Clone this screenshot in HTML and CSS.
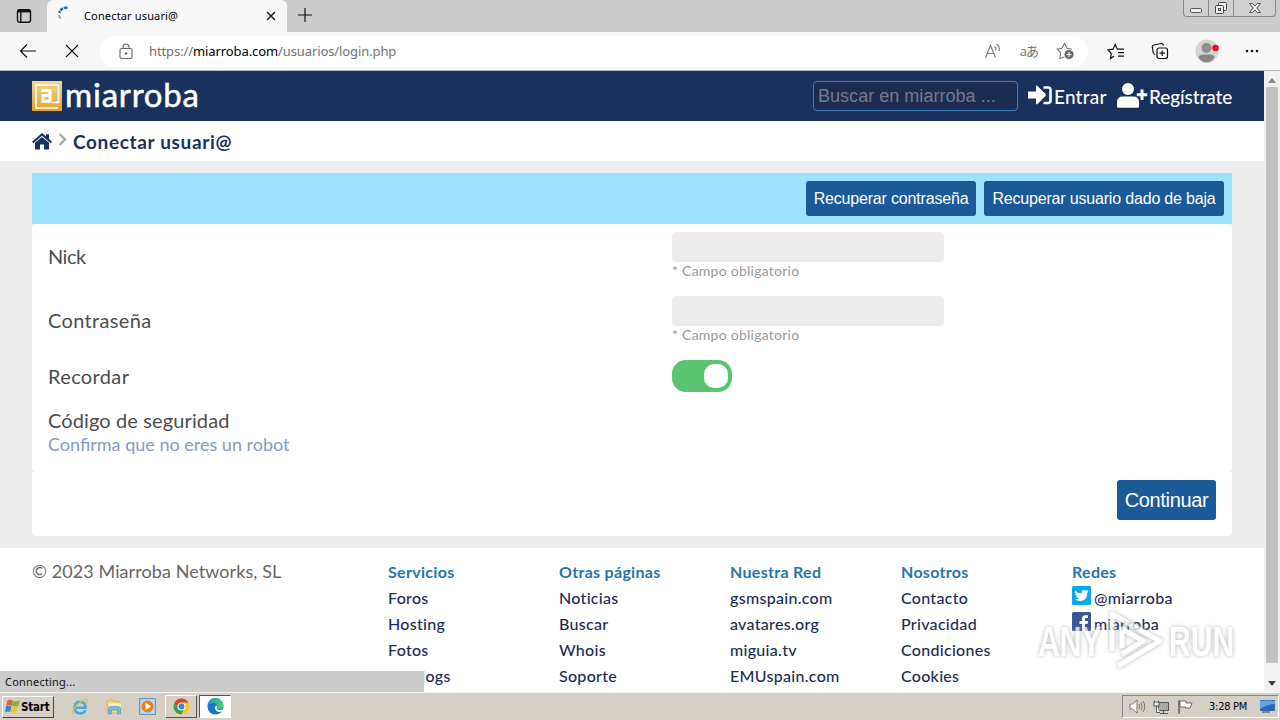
FILE: index.html
```html
<!DOCTYPE html>
<html lang="es">
<head>
    <meta charset="UTF-8">
    <meta name="viewport" content="width=device-width, initial-scale=1.0">
    <title>Conectar usuari@</title>
    <link rel="stylesheet" href="styles.css">
</head>
<body>
    <!-- Browser tabs -->
    <div class="tabstrip">
        <div class="tab-actions">
            <svg width="16" height="16" viewBox="0 0 16 16" fill="none" stroke="#111" stroke-width="1.4"><rect x="1.5" y="1.7" width="13" height="12.6" rx="2"/><path d="M1.5 3.2h13" stroke-width="2.4"/><path d="M4.8 4v10"/></svg>
        </div>
        <div class="tab">
            <svg class="spinner" width="16" height="16" viewBox="0 0 16 16" fill="none" stroke="#1f6cab" stroke-width="2.6"><path d="M11.5 1.8Q5 1.2 3.2 7" stroke-dasharray="3.4 1"/><path d="M3 9.2Q3.3 11 4.6 12.4" stroke="#6fa6cf" stroke-width="2"/></svg>
            <span class="tab-title">Conectar usuari@</span>
            <svg class="tab-close" width="10" height="10" viewBox="0 0 10 10" stroke="#111" stroke-width="1.3"><path d="M1 1l8 8M9 1l-8 8"/></svg>
        </div>
        <svg class="new-tab" width="16" height="16" viewBox="0 0 16 16" stroke="#111" stroke-width="1.2"><path d="M8 1v14M1 8h14"/></svg>
        <div class="window-buttons">
            <span class="win-min"><svg width="14" height="7" viewBox="0 0 14 7" fill="#eee" stroke="#555"><rect x="1.5" y="1.5" width="11" height="4" rx="1"/></svg></span>
            <span class="win-max"><svg width="14" height="14" viewBox="0 0 14 14" fill="#eee" stroke="#444"><rect x="4.5" y="1.5" width="8" height="8" rx="1"/><rect x="1.5" y="4.5" width="8" height="8" rx="1"/><rect x="4.5" y="7.5" width="2" height="2"/></svg></span>
            <span class="win-close"><svg width="14" height="12" viewBox="0 0 14 12" fill="#eee" stroke="#555"><path d="M1.5 1.5h3.2L7 4l2.3-2.5h3.2L8.8 6l3.7 4.5H9.3L7 8l-2.3 2.5H1.5L5.2 6z"/></svg></span>
        </div>
    </div>

    <!-- Address bar -->
    <div class="toolbar">
        <svg class="back" width="18" height="16" viewBox="0 0 18 16" fill="none" stroke="#111" stroke-width="1.2"><path d="M17 8H1.5M8 1.5L1.5 8L8 14.5"/></svg>
        <svg class="stop" width="14" height="14" viewBox="0 0 14 14" stroke="#111" stroke-width="1.1"><path d="M1 1l12 12M13 1L1 13"/></svg>
        <div class="address">
            <svg class="lock" width="14" height="17" viewBox="0 0 14 17" fill="none" stroke="#666" stroke-width="1.1"><rect x="1" y="5.5" width="12" height="10" rx="1.5"/><path d="M4 5.5V4a3 3 0 0 1 6 0v1.5"/><circle cx="7" cy="10.5" r=".8" fill="#666"/></svg>
            <span class="url">https://<b>miarroba.com</b>/usuarios/login.php</span>
            <svg class="read" width="18" height="16" viewBox="0 0 18 16" fill="none" stroke="#777" stroke-width="1.1"><path d="M1.5 14.5L6.5 2.5L11.5 14.5M3.3 10.5h6.5M10.5 3.5q2 1.5 1.5 4M12.5 1q3.5 2.5 2.5 7"/></svg>
            <span class="translate">aあ</span>
            <svg class="fav" width="19" height="18" viewBox="0 0 19 18" fill="none" stroke="#777" stroke-width="1.1"><path d="M8.5 15L4 16.5L4.6 11L1.2 7.2L6 6.2L8.5 1.5L11 6.2L15.8 7.2"/><circle cx="13" cy="12.5" r="4.6" fill="#666" stroke="none"/><path d="M13 10v5M10.5 12.5h5" stroke="#fff"/></svg>
        </div>
        <svg class="favs" width="18" height="17" viewBox="0 0 18 17" fill="none" stroke="#111" stroke-width="1.2"><path d="M7 13L3.5 15.5L4.3 10.5L1 7L6 6.2L8.2 1.5L10.3 6.2H17M11 9.7h6M11 13.2h6"/></svg>
        <svg class="collections" width="18" height="18" viewBox="0 0 18 18" fill="none" stroke="#111" stroke-width="1.2"><rect x="6" y="6" width="10.5" height="10.5" rx="2"/><path d="M11.2 8.5v5.5M8.5 11.2H14M4 12.5Q2.5 12 2.2 10.5L1.3 5Q1.2 3.3 3 3L10 1.5Q12 1.2 12.5 3.5"/></svg>
        <svg class="avatar" width="24" height="24" viewBox="0 0 24 24"><circle cx="12" cy="12" r="11.5" fill="#d6d4d2"/><circle cx="11.5" cy="9" r="5" fill="#918d8c"/><path d="M3.500 18.500Q4 15.500 8 15.500H15.500Q19 15.500 19.500 18.500Q16.500 23.500 11.500 23.500Q6.500 23.500 3.500 18.500z" fill="#8a8685"/><circle cx="20.500" cy="9" r="3.200" fill="#e3101c"/></svg>
        <svg class="more" width="14" height="4" viewBox="0 0 14 4" fill="#111"><circle cx="2" cy="2" r="1.3"/><circle cx="7" cy="2" r="1.3"/><circle cx="12" cy="2" r="1.3"/></svg>
    </div>

    <div class="viewport">
        <div class="page">
            <header class="site-header">
                <svg class="logo-mark" width="30" height="30" viewBox="0 0 30 30">
                    <defs><linearGradient id="gold" x1="0" y1="0" x2="0" y2="1"><stop offset="0" stop-color="#f3d58b"/><stop offset="1" stop-color="#e5a127"/></linearGradient></defs>
                    <rect width="30" height="30" fill="url(#gold)"/>
                    <path d="M26 27H4V4H26.500V21.500H20" fill="none" stroke="#fff" stroke-width="1.700"/>
                    <path d="M9.500 9.500H18V21.500M18 14.500H11V20.200H18" fill="none" stroke="#fff" stroke-width="3"/>
                </svg>
                <span class="logo-text">miarroba</span>
                <input class="search" type="text" placeholder="Buscar en miarroba ...">
                <a class="nav-link login" href="#"><svg width="24" height="20" viewBox="0 0 24 20" fill="#fff"><path d="M0 6.500H8V1.500Q8 0 9.500 1L17.500 9Q18.300 10 17.500 11L9.500 19Q8 20 8 18.500V13.500H0z"/><path d="M15.500 2.500H20Q22.500 2.500 22.500 5V15.500Q22.500 18 20 18H15.500" fill="none" stroke="#fff" stroke-width="2.600"/></svg><span>Entrar</span></a>
                <a class="nav-link register" href="#"><svg width="31" height="25" viewBox="0 0 31 25" fill="#fff"><circle cx="11" cy="6" r="6"/><path d="M0 24V19Q0 13.500 6 13.500H16Q22 13.500 22 19V24Q22 24.800 21 24.800H1Q0 24.800 0 24z"/><path d="M25 6.500V17M19.800 11.800H30.300" stroke="#fff" stroke-width="3"/></svg><span>Regístrate</span></a>
            </header>

            <nav class="breadcrumb">
                <svg width="20" height="17" viewBox="0 0 20 17" fill="#1a315d"><path d="M10 0L14 3.400V1.200H17V6L20 8.700L18.700 10.200L10 2.800L1.300 10.200L0 8.700z"/><path d="M10 3.900L17 9.800V16.500H12V11.500H8V16.500H3V9.800z"/></svg>
                <svg class="chevron" width="9" height="13" viewBox="0 0 9 13" fill="none" stroke="#aaa" stroke-width="2.400"><path d="M1.500 1L7 6.500L1.500 12"/></svg>
                <span class="crumb">Conectar usuari@</span>
            </nav>

            <main class="content">
                <div class="actions">
                    <button class="btn small recover">Recuperar contraseña</button>
                    <button class="btn small restore">Recuperar usuario dado de baja</button>
                </div>
                <form class="card login-form">
                    <div class="row">
                        <label class="nick">Nick</label>
                        <div class="field"><input type="text"><small>* Campo obligatorio</small></div>
                    </div>
                    <div class="row">
                        <label class="pass">Contraseña</label>
                        <div class="field"><input type="password"><small>* Campo obligatorio</small></div>
                    </div>
                    <div class="row">
                        <label class="remember">Recordar</label>
                        <div class="toggle"></div>
                    </div>
                    <div class="captcha">
                        <label class="code">Código de seguridad</label>
                        <span class="captcha-hint">Confirma que no eres un robot</span>
                    </div>
                </form>
                <div class="card submit">
                    <button class="btn continue">Continuar</button>
                </div>
            </main>

            <footer class="site-footer">
                <div class="copyright">© 2023 Miarroba Networks, SL</div>
                <ul>
                    <li class="title">Servicios</li>
                    <li>Foros</li>
                    <li>Hosting</li>
                    <li>Fotos</li>
                    <li>Fotologs</li>
                </ul>
                <ul>
                    <li class="title">Otras páginas</li>
                    <li>Noticias</li>
                    <li>Buscar</li>
                    <li>Whois</li>
                    <li>Soporte</li>
                </ul>
                <ul>
                    <li class="title">Nuestra Red</li>
                    <li>gsmspain.com</li>
                    <li>avatares.org</li>
                    <li>miguia.tv</li>
                    <li>EMUspain.com</li>
                </ul>
                <ul>
                    <li class="title">Nosotros</li>
                    <li>Contacto</li>
                    <li>Privacidad</li>
                    <li>Condiciones</li>
                    <li>Cookies</li>
                </ul>
                <ul>
                    <li class="title">Redes</li>
                    <li class="social"><svg width="19" height="19" viewBox="0 0 19 19"><rect width="19" height="19" rx="1.500" fill="#0aa9e8"/><path d="M3 4.500Q6 7.500 9.500 7.500Q9.300 4 12.300 4Q13.500 4 14.300 4.800L16.300 4L15.300 5.800L16.500 5.700L15.200 7.200Q15 14.800 8 15Q5 15 3 13.600Q5.500 13.700 6.700 12.500Q4.800 12.200 4.200 10.600H5.300Q3.200 9.700 3.200 7.700L4.200 8Q2.300 6.500 3 4.500z" fill="#fff"/></svg>@miarroba</li>
                    <li class="social"><svg width="19" height="19" viewBox="0 0 19 19"><rect width="19" height="19" rx="1.500" fill="#3b5694"/><path d="M10 19V12H7.500V9H10V7Q10 3.300 13.500 3.300H16V6H14.300Q13 6 13 7.300V9H16L15.600 12H13V19z" fill="#fff"/></svg>miarroba</li>
                </ul>
            </footer>
            <div class="status">Connecting...</div>
        </div>
        <div class="scrollbar">
            <svg width="8" height="5" viewBox="0 0 8 5" fill="#858585"><path d="M0 5L4 0L8 5z"/></svg>
            <div class="thumb"></div>
            <svg width="8" height="5" viewBox="0 0 8 5" fill="#444"><path d="M0 0L4 5L8 0z"/></svg>
        </div>
    </div>

    <div class="taskbar">
        <div class="start">
            <svg width="15" height="15" viewBox="0 0 15 15"><path d="M2.500 1.500Q5 0 7.800 1.500L6.700 6.800Q4 5.800 1.200 7z" fill="#e8602c"/><path d="M8 1.800Q11 3 15 1.500L13.300 7Q10 8.200 7 6.800z" fill="#79b83b"/><path d="M1 7.300Q3.800 6.200 6.500 7.200L5.200 13Q2.500 12 0 13.500z" fill="#3b86d0"/><path d="M6.800 7.300Q10 8.700 13.200 7.300L11.700 13.300Q8.500 14.500 5.500 13.200z" fill="#f5c336"/></svg>
            <span>Start</span>
        </div>
        <svg class="task-ie" width="18" height="18" viewBox="0 0 18 18" fill="none"><path d="M14.500 12.200Q13 15.500 9 15.500Q3.500 15 3.500 9.500Q4 4 9 3.800Q14.500 4 14.500 9.800H4.500" stroke="#43a9e0" stroke-width="2.600"/><path d="M2.500 16.500Q-.5 14 5.500 7.500Q12 1 15.500 1.800Q17.500 2.500 15.500 6" stroke="#e9bf43" stroke-width="1.300"/></svg>
        <svg class="task-folder" width="18" height="18" viewBox="0 0 18 18"><path d="M2 3.500L7 1.500L8.500 3.500H15V15H2z" fill="#f0d77d" stroke="#cfae50" stroke-width=".7"/><path d="M4 5.500H16V9H4z" fill="#fbefb5"/><path d="M3.500 16V11Q3.500 8.500 6 8.500H13Q15.500 8.500 15.500 11V16H12.500V12H6.500V16z" fill="#77bce2" stroke="#4e92bd" stroke-width=".6"/></svg>
        <svg class="task-media" width="17" height="17" viewBox="0 0 17 17"><rect x=".5" y=".5" width="16" height="16" fill="#a8d0ea" stroke="#5f9cc8"/><rect x="2.500" y="2.500" width="12" height="12" fill="#c5dded"/><circle cx="8.500" cy="8.500" r="6" fill="#ed7f17"/><path d="M6.500 4.700V12.300L12.300 8.500z" fill="#fff"/></svg>
        <div class="task raised">
            <svg width="17" height="17" viewBox="0 0 17 17"><circle cx="8.500" cy="8.500" r="8" fill="#f8c925"/><path d="M8.500 8.500H4.800L1.600 4.500A8 8 0 0 0 8.200 16.500L11.700 10.300z" fill="#38a24b"/><path d="M1.600 4.500A8 8 0 0 1 15.400 4.500H8.500A4 4 0 0 0 5 10.500z" fill="#df3c2e"/><circle cx="8.500" cy="8.500" r="4" fill="#fff"/><circle cx="8.500" cy="8.500" r="3" fill="#3e7ee8"/></svg>
        </div>
        <div class="task active">
            <svg width="17" height="17" viewBox="0 0 17 17"><defs><linearGradient id="edge"><stop offset="0" stop-color="#1d8fd8"/><stop offset="1" stop-color="#54cf64"/></linearGradient></defs><circle cx="8.500" cy="8.500" r="8" fill="#1676c8"/><path d="M.5 8A8 8 0 0 1 16.500 7.500Q16.500 11 12.500 11Q9 11 10.200 8.500Q10 5 6 5Q2.500 5 .5 8z" fill="url(#edge)"/><path d="M10.200 7.500Q8.800 11 11.500 11.800Q14 12.300 16.200 11.300L15 13.500Q12 14.500 9.500 13Q7.500 11.500 8 9Q8.800 7.500 10.200 7.500z" fill="#fff"/></svg>
        </div>
        <div class="tray">
            <svg class="tray-sound" width="17" height="15" viewBox="0 0 17 15" fill="#fff" stroke="#777"><path d="M1 5H3.500L8 1V14L3.500 10H1z"/><path d="M10 5Q11.500 7.500 10 10M12 3.500Q14.500 7.500 12 11.500M14 2Q17.500 7.500 14 13" fill="none"/></svg>
            <svg class="tray-net" width="17" height="16" viewBox="0 0 17 16" fill="#eee" stroke="#555"><rect x="5.500" y="3.500" width="10" height="8" fill="#aaa"/><path d="M7 14.500h8M10.500 12v2M1.500 1.500V5.500H5.500V1.500M3.500 5.500V13.500H7"/><rect x="1" y="3" width="5" height="4"/></svg>
            <svg class="tray-flag" width="17" height="16" viewBox="0 0 17 16" fill="#fff" stroke="#666"><path d="M2 1V15" stroke-width="1.600"/><path d="M3 2H9V4H15L13 9H8.500V8H3z"/></svg>
            <span class="clock">3:28 PM</span>
            <svg class="tray-desktop" width="15" height="13" viewBox="0 0 15 13"><rect width="15" height="11" rx="1" fill="#2b66bb"/><path d="M0 1Q7 0 15 1V4Q7 4 0 9z" fill="#68a4de"/><path d="M2 12h8" stroke="#345"/></svg>
        </div>
    </div>

    <div class="watermark">
        <span>ANY</span>
        <svg width="58" height="64" viewBox="0 0 58 64" fill="none" stroke="#fff" stroke-width="5" stroke-linejoin="round"><path d="M4 42V5L52 32L10 57"/><path d="M14 39V20L35 32L14 45"/></svg>
        <span>RUN</span>
    </div>
</body>
</html>
```
FILE: styles.css
```css
* {
    box-sizing: border-box;
}

body {
    margin: 0;
    width: 1280px;
    height: 720px;
    display: flex;
    flex-direction: column;
    overflow: hidden;
    position: relative;
    background-color: #d5cfc6;
    font-family: Lato, sans-serif;
}

svg {
    display: block;
    flex: none;
}

/* Browser */
.tabstrip {
    height: 32px;
    display: flex;
    background-color: #cccccc;
    font-family: "Noto Sans", sans-serif;
    font-size: 11px;
}

.tab-actions {
    width: 47px;
    padding: 8px 0 0 16px;
}

.tab {
    width: 240px;
    display: flex;
    align-items: center;
    padding: 0 11px 0 9px;
    background-color: #f7f7f7;
    border-radius: 6px 6px 0 0;
}

.tab-title {
    margin: -2px 0 0 12px;
    flex: 1;
    white-space: nowrap;
    letter-spacing: 0.15px;
}

.spinner {
    margin-top: -4px;
}

.new-tab {
    margin: 7px 0 0 10px;
}

.window-buttons {
    margin-left: auto;
    margin-right: 4px;
    width: 93px;
    height: 17px;
    display: flex;
    border: 1px solid #888;
    border-top: 0;
    border-radius: 0 0 4px 4px;
    background-color: #d0d0d0;
}

.window-buttons span {
    display: flex;
    align-items: center;
    justify-content: center;
    width: 25px;
    border-right: 1px solid #888;
}

.window-buttons .win-min {
    padding-top: 4px;
}

.window-buttons .win-close {
    flex: 1;
    border-right: 0;
}

.toolbar {
    height: 39px;
    display: flex;
    align-items: center;
    background-color: #f7f7f7;
    border-bottom: 1px solid #a9b6bd;
}

.back {
    margin-left: 19px;
}

.stop {
    margin-left: 28px;
}

.address {
    width: 988px;
    height: 31px;
    margin-left: 21px;
    padding: 0 13px 0 19px;
    display: flex;
    align-items: center;
    background-color: #fff;
    border-radius: 16px;
    color: #707070;
}

.url {
    margin-left: 16px;
    flex: 1;
    font-family: "Noto Sans", sans-serif;
    font-size: 13px;
    letter-spacing: -0.1px;
}

.url b {
    font-weight: 400;
    color: #000;
}

.translate {
    margin: -2px 18px 0 18px;
    font-family: "Open Sans", "Noto Sans CJK JP", sans-serif;
    font-size: 13px;
    letter-spacing: -1px;
}

.favs {
    margin-left: 19px;
}

.collections {
    margin-left: 26px;
}

.avatar {
    margin-left: 26px;
}

.more {
    margin-left: 26px;
}

.viewport {
    height: 621px;
    display: flex;
    overflow: hidden;
}

.page {
    width: 1264px;
    position: relative;
    overflow: hidden;
    background-color: #fff;
}

.scrollbar {
    width: 16px;
    display: flex;
    flex-direction: column;
    align-items: center;
    padding: 7px 0 6px;
    background-color: #f1f1f1;
}

.thumb {
    width: 12px;
    height: 576px;
    margin: 4px 0 auto;
    background-color: #c1c1c1;
}

/* Site header */
.site-header {
    height: 50px;
    padding: 0 32px;
    display: flex;
    align-items: center;
    background-color: #1a315d;
    color: #fff;
}

.logo-text {
    margin: -5px 0 0 3px;
    font-size: 33px;
    letter-spacing: 0.8px;
    -webkit-text-stroke: 0.5px #fff;
}

.search {
    width: 205px;
    height: 30px;
    margin-left: auto;
    padding: 0 4px;
    border: 1px solid #397fb5;
    border-radius: 4px;
    background-color: #1b2b52;
    font: 18px "Liberation Sans", Arial, sans-serif;
    letter-spacing: 0.03px;
    color: #fff;
}

.search::placeholder {
    color: #777b86;
}

.nav-link {
    display: flex;
    align-items: center;
    color: #fff;
    font-size: 19px;
    font-weight: 500;
    text-decoration: none;
}

.nav-link span {
    margin: 1px 0 0 2px;
    letter-spacing: 0.2px;
}

.nav-link svg {
    margin-top: -2px;
}

.login {
    width: 79px;
    margin-left: 10px;
}

.register {
    width: 115px;
    margin-left: 10px;
}

.register span {
    margin-left: 1px;
    letter-spacing: -0.1px;
}

.breadcrumb {
    height: 40px;
    padding: 0 32px;
    display: flex;
    align-items: center;
    color: #1a315d;
}

.chevron {
    margin: -3px 6px 0;
}

.crumb {
    margin-top: 1px;
    font-size: 19px;
    font-weight: 700;
    letter-spacing: 0.65px;
}

/* Content */
.content {
    height: 387px;
    padding: 12px 32px;
    background-color: #ededed;
}

.actions {
    height: 51px;
    padding: 8px;
    display: flex;
    justify-content: flex-end;
    gap: 8px;
    background-color: #9ce3ff;
}

.btn {
    padding: 0;
    border: 0;
    border-radius: 3px;
    background-color: #1b5a98;
    color: #fff;
    font-family: "Liberation Sans", Arial, sans-serif;
    white-space: nowrap;
}

.small {
    height: 35px;
    font-size: 16px;
    letter-spacing: -0.18px;
}

.recover {
    width: 170px;
}

.restore {
    width: 240px;
}

.card {
    background-color: #fff;
    border-radius: 4px;
}

.login-form {
    height: 247px;
    padding: 8px 16px;
    color: #4d4d4d;
    font-size: 20px;
}

.row {
    display: grid;
    grid-template-columns: 624px 1fr;
    align-items: center;
    margin-bottom: 16px;
}

.row label {
    letter-spacing: 0.35px;
}

.row .nick {
    letter-spacing: -0.5px;
}

.code {
    letter-spacing: 0.12px;
}

.field {
    height: 48px;
}

.field input {
    display: block;
    width: 272px;
    height: 30px;
    border: 0;
    border-radius: 4px;
    background-color: #ededed;
}

.field small {
    display: block;
    color: #999;
    font-size: 14px;
    line-height: 17px;
    letter-spacing: 0.25px;
}

.toggle {
    width: 60px;
    height: 32px;
    padding: 4px;
    border-radius: 14px;
    background-color: #5bc470;
}

.toggle::after {
    content: "";
    display: block;
    width: 24px;
    height: 24px;
    margin-left: auto;
    border-radius: 10px;
    background-color: #fff;
}

.captcha {
    display: flex;
    flex-direction: column;
    align-items: flex-start;
    line-height: 24px;
}

.captcha-hint {
    color: #7f9bc9;
    font-size: 18px;
}

.submit {
    height: 65px;
    padding: 9px 16px;
    display: flex;
    justify-content: flex-end;
}

.continue {
    width: 99px;
    height: 40px;
    font-size: 20px;
    letter-spacing: -0.35px;
}

/* Footer */
.site-footer {
    display: grid;
    grid-template-columns: 356px repeat(5, 171px);
    padding: 11px 0 0 32px;
    color: #1d2c58;
    font-size: 16px;
    font-weight: 500;
    line-height: 26px;
    letter-spacing: 0.3px;
}

.copyright {
    color: #666;
    font-size: 18px;
    font-weight: 400;
    line-height: 25px;
    letter-spacing: 0.08px;
}

.site-footer ul {
    margin: 0;
    padding: 0;
    list-style: none;
}

.site-footer li {
    height: 26px;
}

.site-footer .title {
    color: #2675ad;
    font-weight: 700;
}

.social {
    display: flex;
}

.social svg {
    margin: 1px 3px 0 0;
}

.status {
    position: absolute;
    left: 0;
    bottom: 0;
    width: 424px;
    height: 21px;
    padding-left: 5px;
    background-color: #cccccc;
    color: #111;
    font: 11px/21px "Noto Sans", sans-serif;
    letter-spacing: 0.2px;
}

/* Taskbar */
.taskbar {
    height: 28px;
    display: flex;
    align-items: center;
    border-top: 1px solid #f5f3ef;
    background-color: #d5cfc6;
}

.start {
    width: 52px;
    height: 22px;
    margin-left: 2px;
    padding-left: 2px;
    display: flex;
    align-items: center;
    border: 1px solid;
    border-color: #fff #444 #444 #fff;
    font: bold 11.5px "DejaVu Sans Condensed", sans-serif;
}

.start span {
    letter-spacing: -0.2px;
    margin-left: 1px;
}

.task-ie {
    margin-left: 17px;
}

.task-folder {
    margin-left: 16px;
}

.task-media {
    margin-left: 16px;
}

.task {
    width: 32px;
    height: 23px;
    display: flex;
    align-items: center;
    justify-content: center;
    border: 1px solid;
}

.raised {
    margin-left: 9px;
    border-color: #fff #555 #555 #fff;
}

.active {
    margin-left: 2px;
    border-color: #555 #fff #fff #555;
    background-color: #fff;
}

.tray {
    width: 157px;
    height: 23px;
    margin: 0 1px 0 auto;
    padding-left: 6px;
    display: flex;
    align-items: center;
    border: 1px solid;
    border-color: #888 #fff #fff #888;
}

.tray-net,
.tray-flag {
    margin-left: 7px;
}

.clock {
    width: 40px;
    margin: 0 11px 0 15px;
    font: 11px "DejaVu Sans Condensed", sans-serif;
    letter-spacing: -0.25px;
    white-space: nowrap;
}

.watermark {
    position: absolute;
    left: 1038px;
    top: 609px;
    display: flex;
    align-items: center;
    color: #fff;
    font: 700 43px "Liberation Sans", Arial, sans-serif;
    opacity: 0.75;
    filter: drop-shadow(0 0 2px #999);
}

.watermark span {
    display: block;
    width: 70px;
    transform: scaleX(0.7);
    transform-origin: left;
}

.watermark svg {
    margin-right: 3px;
}
```
